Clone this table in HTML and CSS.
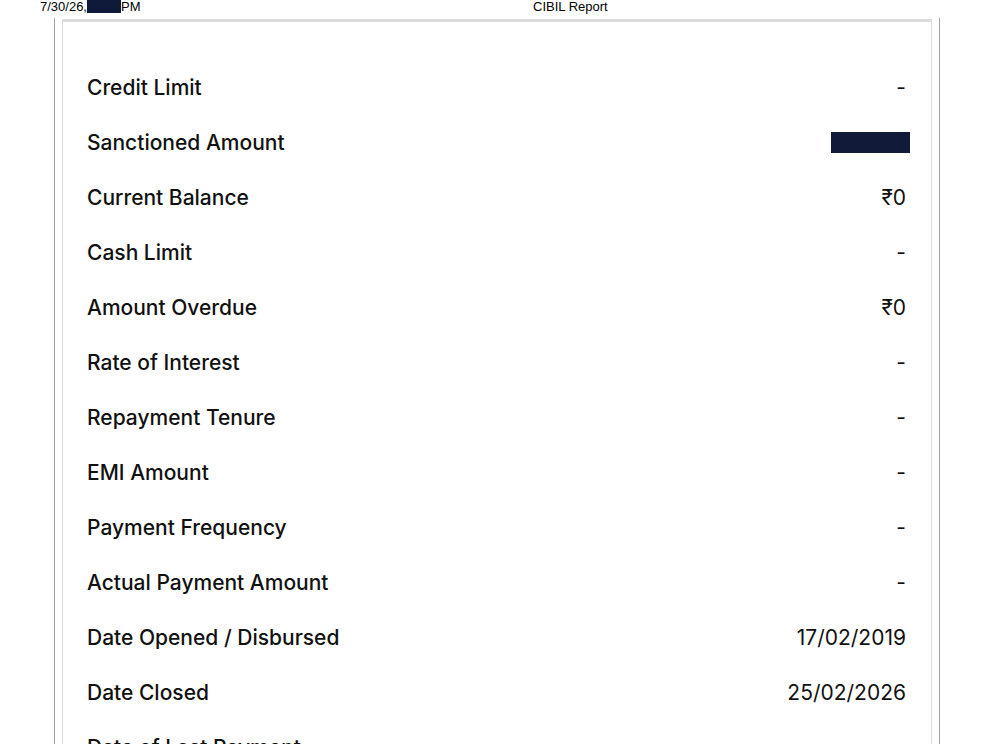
FILE: index.html
```html
<!DOCTYPE html>
<html>
<head>
<meta charset="utf-8">
<link rel="stylesheet" href="styles.css">
</head>
<body>
<header class="print-head">
  <div class="stamp">7/30/26,<span class="redact-sm"></span>PM</div>
  <div class="title">CIBIL Report</div>
</header>
<div class="page">
  <section class="card">
    <div class="row"><span class="label">Credit Limit</span><span class="value">-</span></div>
    <div class="row"><span class="label">Sanctioned Amount</span><span class="value"><span class="redact-lg"></span></span></div>
    <div class="row"><span class="label">Current Balance</span><span class="value">₹0</span></div>
    <div class="row"><span class="label">Cash Limit</span><span class="value">-</span></div>
    <div class="row"><span class="label">Amount Overdue</span><span class="value">₹0</span></div>
    <div class="row"><span class="label">Rate of Interest</span><span class="value">-</span></div>
    <div class="row"><span class="label">Repayment Tenure</span><span class="value">-</span></div>
    <div class="row"><span class="label">EMI Amount</span><span class="value">-</span></div>
    <div class="row"><span class="label">Payment Frequency</span><span class="value">-</span></div>
    <div class="row"><span class="label">Actual Payment Amount</span><span class="value">-</span></div>
    <div class="row"><span class="label">Date Opened / Disbursed</span><span class="value">17/02/2019</span></div>
    <div class="row"><span class="label">Date Closed</span><span class="value">25/02/2026</span></div>
    <div class="row"><span class="label">Date of Last Payment</span><span class="value">-</span></div>
  </section>
</div>
</body>
</html>
```

FILE: styles.css
```css
*, *::before, *::after {
  box-sizing: border-box;
}
html, body {
  margin: 0;
  padding: 0;
  background: #fff;
  overflow: hidden;
}
body {
  width: 992px;
  height: 744px;
  color: #111;
}
.print-head {
  display: grid;
  grid-template-columns: 493px auto;
  height: 18px;
  padding-left: 40px;
  font-family: "Liberation Sans", Arial, sans-serif;
  font-size: 13px;
  line-height: 13px;
  color: #000;
}
.stamp {
  display: flex;
  align-items: flex-start;
}
.redact-sm {
  display: inline-block;
  width: 34px;
  height: 13px;
  background: #0f1a3a;
}
.page {
  margin-left: 54px;
  width: 886px;
  height: 800px;
  border-left: 1px solid #a0a0a0;
  border-right: 1px solid #a0a0a0;
  padding: 1px 7px 0 7px;
}
.card {
  border: 1px solid #dcdcdc;
  border-top: 3px solid #dcdcdc;
  padding: 38px 25px 0 24px;
  height: 760px;
  font-family: "Inter", "Noto Sans", sans-serif;
}
.row {
  display: flex;
  justify-content: space-between;
  align-items: center;
  height: 55px;
}
.label {
  font-size: 21px;
  font-weight: 500;
  color: #111;
}
.value {
  font-size: 21px;
  font-weight: 400;
  color: #111;
  display: flex;
  align-items: center;
}
.redact-lg {
  display: inline-block;
  width: 79px;
  height: 21px;
  margin-right: -4px;
  background: #111a38;
}
```
